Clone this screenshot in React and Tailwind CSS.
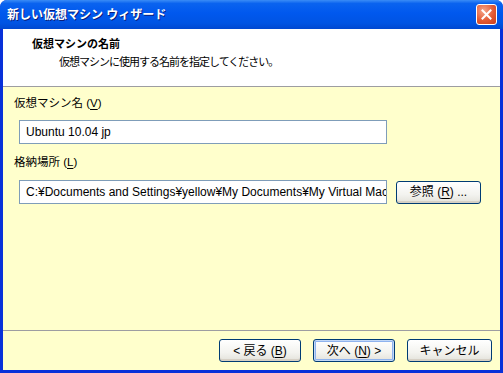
import React from 'react';

const font = { fontFamily: '"Liberation Sans", "Noto Sans CJK JP", sans-serif' };

const Mn = ({ children }) => <span className="underline underline-offset-2">{children}</span>;

const XpButton = ({ children, primary = false, className = '' }) => (
  <button
    type="button"
    className={`h-[23px] w-[82px] rounded-[3px] border border-[#003c74] bg-[linear-gradient(to_bottom,#ffffff,#f3f3ef_60%,#e3e2da)] text-[12px] leading-none text-black ${
      primary ? 'shadow-[inset_0_0_0_1px_#c2d8f7,inset_0_0_0_2px_#8fb3ee]' : 'shadow-[inset_0_-2px_0_#d6d0c5]'
    } ${className}`}
  >
    {children}
  </button>
);

const TextBox = ({ value }) => (
  <input
    type="text"
    readOnly
    value={value}
    className="h-[24px] w-[368px] border border-[#7f9db9] bg-white pl-[6px] text-[12px] text-black outline-none"
  />
);

export default function App() {
  return (
    <div className="flex h-[373px] w-[503px] flex-col overflow-hidden rounded-t-[7px] bg-[#0831d9]" style={font}>
      {/* title bar */}
      <div className="flex h-[29px] shrink-0 items-center justify-between bg-[linear-gradient(to_bottom,#3a8cf6,#0a63ef_12%,#0058ee_45%,#0054e3_80%,#0048d0)] pl-[7px] pr-[6px]">
        <span className="text-[12px] font-bold text-white [text-shadow:1px_1px_0_#0a1e7a]">新しい仮想マシン ウィザード</span>
        <div className="flex h-[21px] w-[21px] items-center justify-center rounded-[3px] border border-white bg-[radial-gradient(circle_at_35%_30%,#f5a68a,#e35a34_55%,#c83d1a)]">
          <svg width="11" height="11" viewBox="0 0 11 11">
            <path d="M1.5 1.5 L9.5 9.5 M9.5 1.5 L1.5 9.5" stroke="white" strokeWidth="2" strokeLinecap="square" />
          </svg>
        </div>
      </div>

      {/* body */}
      <div className="mx-[3px] mb-[3px] flex flex-1 flex-col bg-[#ffffcc]">
        <div className="h-[58px] shrink-0 border-b border-[#9d9da1] bg-white pl-[29px] pt-[7px] leading-[16px] text-black">
          <div className="text-[11px] font-bold">仮想マシンの名前</div>
          <div className="mt-[2px] pl-[27px] text-[11px] tracking-[-1px]">仮想マシンに使用する名前を指定してください。</div>
        </div>

        <div className="flex flex-1 flex-col pl-[11px] pt-[8px] text-[11.5px] leading-[16px] text-black">
          <div>
            仮想マシン名 (<Mn>V</Mn>)
          </div>
          <div className="ml-[5px] mt-[9px]">
            <TextBox value="Ubuntu 10.04 jp" />
          </div>
          <div className="mt-[10px]">
            格納場所 (<Mn>L</Mn>)
          </div>
          <div className="ml-[5px] mt-[10px] flex items-center gap-[9px]">
            <TextBox value="C:¥Documents and Settings¥yellow¥My Documents¥My Virtual Machines" />
            <XpButton className="w-[85px]">
              参照 (<Mn>R</Mn>) ...
            </XpButton>
          </div>
        </div>

        <div className="flex h-[40px] shrink-0 items-start justify-end gap-[12px] border-t border-[#9d9da1] pr-[8px] pt-[8px]">
          <XpButton>
            &lt; 戻る (<Mn>B</Mn>)
          </XpButton>
          <XpButton primary>
            次へ (<Mn>N</Mn>) &gt;
          </XpButton>
          <XpButton className="w-[85px]">キャンセル</XpButton>
        </div>
      </div>
    </div>
  );
}
